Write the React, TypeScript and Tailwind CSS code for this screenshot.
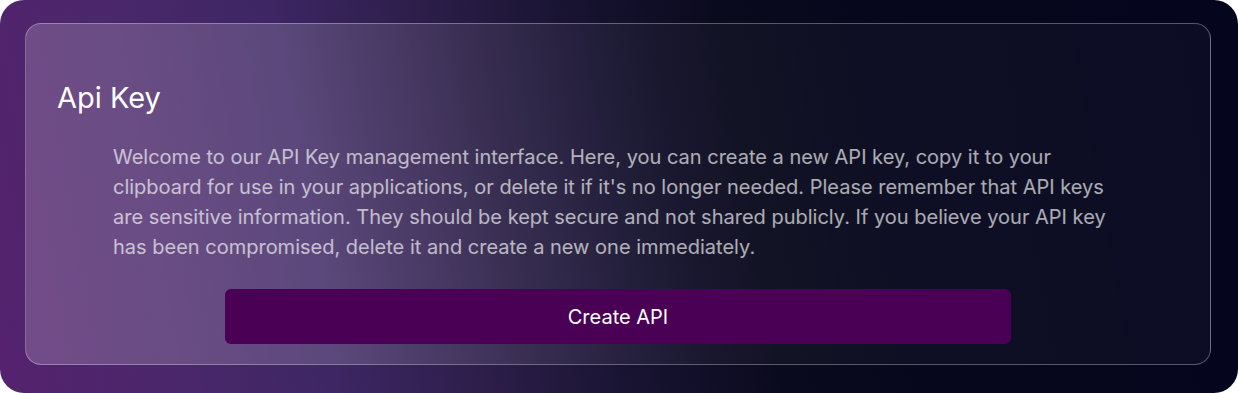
import React from "react";

export default function App() {
  return (
    <div className="w-[1238px] h-[393px] bg-white" style={{ fontFamily: "Inter, 'Noto Sans', sans-serif" }}>
      <div className="w-full h-full rounded-[24px] pl-[25px] pr-[27px] pt-[23px] pb-[28px] bg-[linear-gradient(80deg,#55226f_0%,#4a276a_14%,#3d2663_26%,#2b1d48_38%,#16122f_50%,#0a0a1e_60%,#06071c_72%,#05061e_100%)]">
        <div className="w-full h-full rounded-[16px] border border-white/30 bg-[linear-gradient(80deg,rgba(255,255,255,0.19)_0%,rgba(255,255,255,0.16)_25%,rgba(255,255,255,0.09)_40%,rgba(255,255,255,0.04)_55%,rgba(255,255,255,0.03)_100%)] px-[31px] pt-[56px] pb-[20px] flex flex-col">
          <h1 className="text-[29px] leading-[36px] text-white font-normal">Api Key</h1>
          <p className="mt-[26px] px-14 text-xl leading-[30px] text-white/65">
            Welcome to our API Key management interface. Here, you can create a new API key, copy it to your clipboard for use in your applications, or delete it if it's no longer needed. Please remember that API keys are sensitive information. They should be kept secure and not shared publicly. If you believe your API key has been compromised, delete it and create a new one immediately.
          </p>
          <div className="flex justify-center mt-auto">
            <button className="w-[70%] h-[55px] rounded-md bg-[#4a0055] text-white text-xl">Create API</button>
          </div>
        </div>
      </div>
    </div>
  );
}
